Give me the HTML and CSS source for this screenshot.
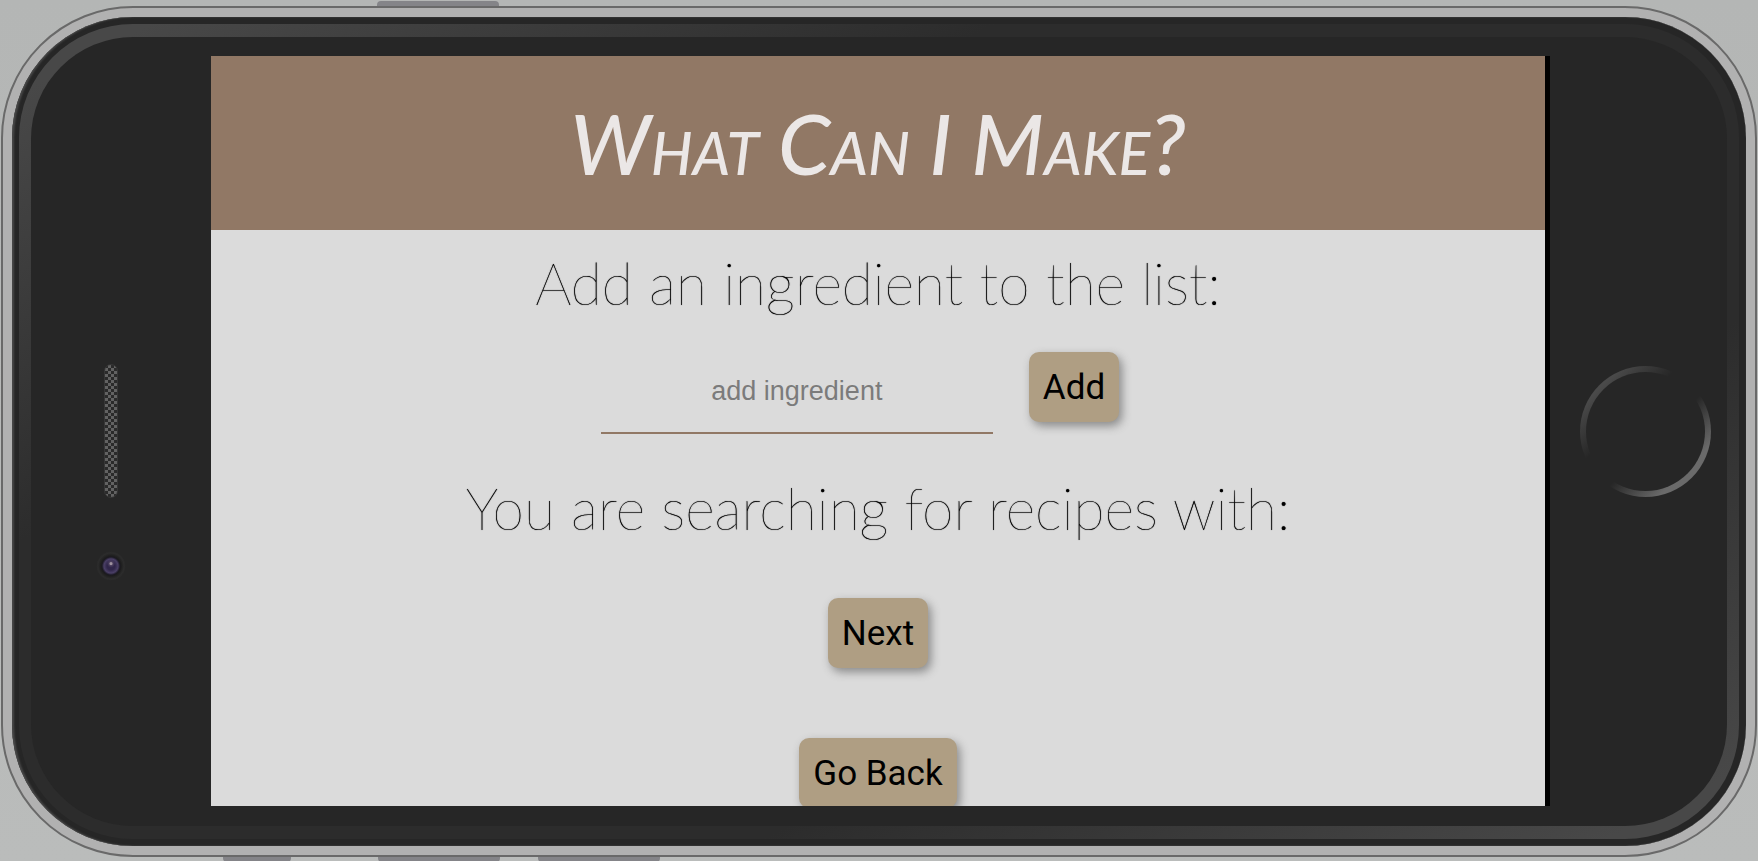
FILE: index.html
```html
<!DOCTYPE html>
<html lang="en">
<head>
<meta charset="utf-8">
<meta name="viewport" content="width=device-width, initial-scale=1">
<title>What Can I Make?</title>
<link rel="stylesheet" href="styles.css">
</head>
<body>
<div class="phone">
  <span class="key key-power"></span>
  <span class="key key-mute"></span>
  <span class="key key-up"></span>
  <span class="key key-down"></span>
  <div class="bezel">
    <div class="rim">
      <div class="face">
        <div class="sensors">
          <span class="speaker"></span>
          <span class="camera"></span>
        </div>
        <div class="screen">
          <header class="banner">
            <h1 class="title">What Can I Make?</h1>
          </header>
          <main class="content">
            <h2 class="prompt"><label for="ingredient">Add an ingredient to the list:</label></h2>
            <form class="add-form">
              <input class="field" id="ingredient" type="text" placeholder="add ingredient">
              <button class="button" type="button">Add</button>
            </form>
            <h2 class="prompt">You are searching for recipes with:</h2>
            <div class="actions">
              <button class="button" type="button">Next</button>
              <button class="button" type="button">Go Back</button>
            </div>
          </main>
        </div>
        <div class="home"><span class="home-ring"></span></div>
      </div>
    </div>
  </div>
</div>
</body>
</html>
```

FILE: styles.css
```css
* {
  box-sizing: border-box;
}

body {
  margin: 0;
  height: 100vh;
  padding: 6px 1px 4px;
  display: flex;
  overflow: hidden;
  background: linear-gradient(#b4b6b5, #babcbb);
}

.phone {
  position: relative;
  flex: 1;
  min-width: 0;
  display: flex;
  padding: 9px;
  border: 2px solid #696969;
  border-radius: 132px;
  background: #b1b1b1;
}

.key {
  position: absolute;
  height: 5px;
  background: #848488;
}

.key-power {
  bottom: calc(100% + 2px);
  left: 374px;
  width: 122px;
  border-radius: 4px 4px 0 0;
}

.key-mute,
.key-up,
.key-down {
  top: calc(100% + 2px);
  width: 122px;
  border-radius: 0 0 4px 4px;
}

.key-mute {
  left: 220px;
  width: 68px;
}

.key-up {
  left: 375px;
}

.key-down {
  left: 535px;
}

.bezel {
  flex: 1;
  min-width: 0;
  display: flex;
  padding: 7px;
  border-radius: 121px;
  background: #262626;
  box-shadow: inset 2px 0 2px #484848, inset 0 0 1px #484848;
}

.rim {
  flex: 1;
  min-width: 0;
  display: flex;
  padding: 13px 12px;
  border-radius: 114px;
  background: linear-gradient(152deg, #484848 4%, #2c2c2c 30%, #2c2c2c 70%, #484848 96%);
}

.face {
  flex: 1;
  min-width: 0;
  display: grid;
  grid-template-columns: 180px minmax(0, 1fr) 177px;
  padding: 19px 0 20px;
  border-radius: 102px;
  background: #262626;
}

.sensors {
  display: grid;
  grid-template-rows: 1fr auto 1fr;
  justify-items: center;
  padding-right: 21px;
}

.speaker {
  grid-row: 2;
  width: 14px;
  height: 134px;
  border: 1px solid #363636;
  border-radius: 7px;
  background: repeating-conic-gradient(#626262 0 25%, #2a2a2a 0 50%) 0 0 / 6px 6px;
}

.camera {
  grid-row: 3;
  width: 30px;
  height: 30px;
  margin-top: 53px;
  border-radius: 50%;
  background:
    radial-gradient(circle at 50% 42%, #a093a0 0 1px, #4b3f5e 2px, transparent 4px),
    radial-gradient(circle at 50% 50%, #30264a 0 4px, #4a3f66 7px, #1b1922 9px, #1d1d1d 10px, #2c2c2c 13px, #262626 15px);
}

.screen {
  min-height: 0;
  overflow: hidden;
  border-right: 5px solid #000;
  background: #dbdbdb;
}

.banner {
  padding: 32px 16px;
  background: #917865;
}

.title {
  margin: 0;
  font: italic 500 84px/110px Lato, sans-serif;
  font-variant-caps: small-caps;
  text-align: center;
  color: #ebe7e6;
}

.content {
  display: flex;
  flex-direction: column;
  align-items: center;
  padding-top: 21px;
}

.prompt {
  margin: 0;
  font: 100 57px/64px Lato, sans-serif;
  text-align: center;
  text-shadow: 0 0 1px #000;
  color: #000;
}

.add-form {
  display: flex;
  align-items: flex-start;
  gap: 36px;
  margin: 35px 36px 42px 0;
}

.field {
  width: 392px;
  height: 84px;
  padding: 0;
  border: 0;
  border-bottom: 2px solid #917865;
  background: none;
  font: 27px "Liberation Sans", Arial, sans-serif;
  text-align: center;
  color: #000;
}

.field::placeholder {
  color: #7b7b7b;
  opacity: 1;
}

.button {
  height: 70px;
  margin-top: 2px;
  padding: 1px 14px 0;
  border: 0;
  border-radius: 10px;
  background: #af9e83;
  box-shadow: 3px 4px 10px #8a8a8a;
  font: 35px Roboto, sans-serif;
  color: #000;
}

.actions {
  display: flex;
  flex-direction: column;
  align-items: center;
  gap: 68px;
  padding-top: 56px;
}

.home {
  display: flex;
  align-items: center;
  justify-content: center;
  padding-left: 14px;
}

.home-ring {
  width: 131px;
  height: 131px;
  border: 6px solid transparent;
  border-radius: 50%;
  background:
    linear-gradient(#262626, #262626) padding-box,
    linear-gradient(135deg, #4a4a4a 16%, #262626 38%, #262626 57%, #6a6a6a 80%) border-box;
}
```
